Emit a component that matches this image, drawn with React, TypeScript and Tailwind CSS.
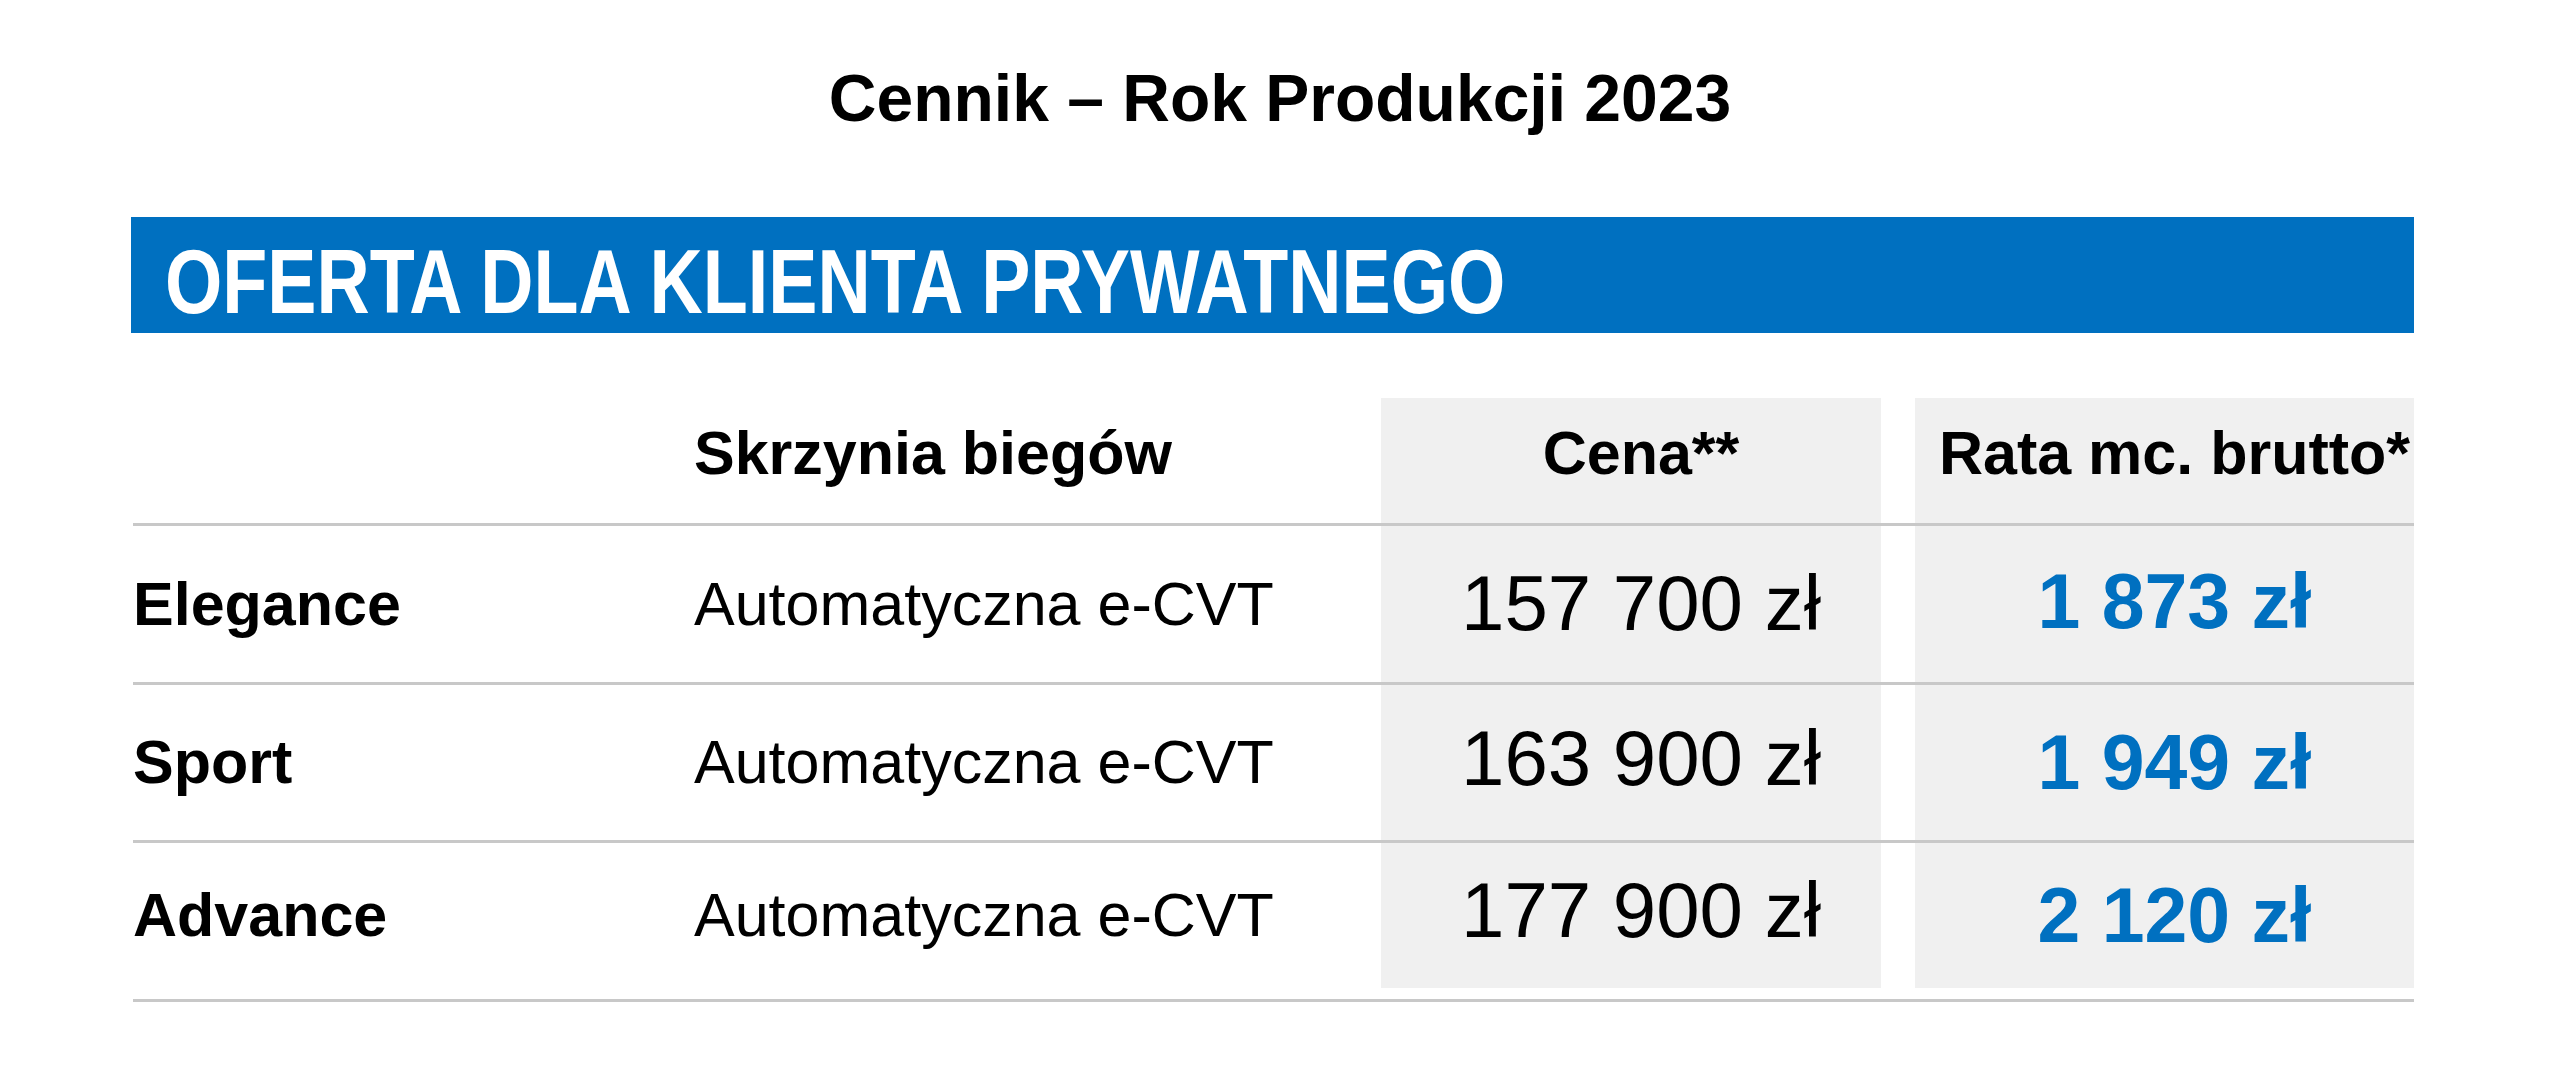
const rows = [
  {
    name: "Elegance",
    gearbox: "Automatyczna e-CVT",
    price: "157 700 zł",
    rate: "1 873 zł",
    priceFix: "pb-[2px]",
    rateFix: "pb-[6px]",
    rowClass: "h-[159px]",
  },
  {
    name: "Sport",
    gearbox: "Automatyczna e-CVT",
    price: "163 900 zł",
    rate: "1 949 zł",
    priceFix: "pb-[10px]",
    rateFix: "",
    rowClass: "h-[158px]",
  },
  {
    name: "Advance",
    gearbox: "Automatyczna e-CVT",
    price: "177 900 zł",
    rate: "2 120 zł",
    priceFix: "pb-[12px]",
    rateFix: "",
    rowClass: "h-[159px] pb-[11px]",
  },
];

const App = () => {
  return (
    <div className="min-h-screen bg-white text-black font-['Liberation_Sans',Arial,sans-serif]">
      {/* Title */}
      <h1 className="pt-[65px] text-center text-[66px] font-bold leading-none">
        Cennik – Rok Produkcji 2023
      </h1>

      {/* Blue banner */}
      <div className="mt-[86px] ml-[131px] w-[2283px] h-[116px] bg-[#0070c0] pl-[34px] pt-[19px]">
        <div className="origin-left scale-x-[0.81] whitespace-nowrap text-[91px] font-bold leading-none text-white">
          OFERTA DLA KLIENTA PRYWATNEGO
        </div>
      </div>

      {/* Price table */}
      <div className="mt-[65px] ml-[133px] w-[2281px]">
        <div className="flex h-[128px] border-b-[3px] border-[#c8c8c8]">
          <div className="w-[561px]" />
          <div className="flex w-[687px] items-center pb-[14px] text-[61px] font-bold leading-none whitespace-nowrap">
            Skrzynia biegów
          </div>
          <div className="flex w-[500px] items-center justify-center bg-[#f0f0f0] pb-[14px] pl-[20px] text-[61px] font-bold leading-none whitespace-nowrap">
            Cena**
          </div>
          <div className="w-[34px]" />
          <div className="flex w-[499px] items-center justify-center bg-[#f0f0f0] pb-[14px] pl-[20px] text-[61px] font-bold leading-none whitespace-nowrap">
            Rata mc. brutto*
          </div>
        </div>

        {rows.map((row) => (
          <div
            key={row.name}
            className={`flex border-b-[3px] border-[#c8c8c8] ${row.rowClass}`}
          >
            <div className="flex w-[561px] items-center text-[61px] font-bold leading-none whitespace-nowrap">
              {row.name}
            </div>
            <div className="flex w-[687px] items-center text-[61px] leading-none whitespace-nowrap">
              {row.gearbox}
            </div>
            <div
              className={`flex w-[500px] items-center justify-center bg-[#f0f0f0] pl-[20px] text-[78px] leading-none whitespace-nowrap ${row.priceFix}`}
            >
              {row.price}
            </div>
            <div className="w-[34px]" />
            <div
              className={`flex w-[499px] items-center justify-center bg-[#f0f0f0] pl-[20px] text-[77px] font-bold leading-none whitespace-nowrap text-[#0070c0] ${row.rateFix}`}
            >
              {row.rate}
            </div>
          </div>
        ))}
      </div>
    </div>
  );
};

export default App;
